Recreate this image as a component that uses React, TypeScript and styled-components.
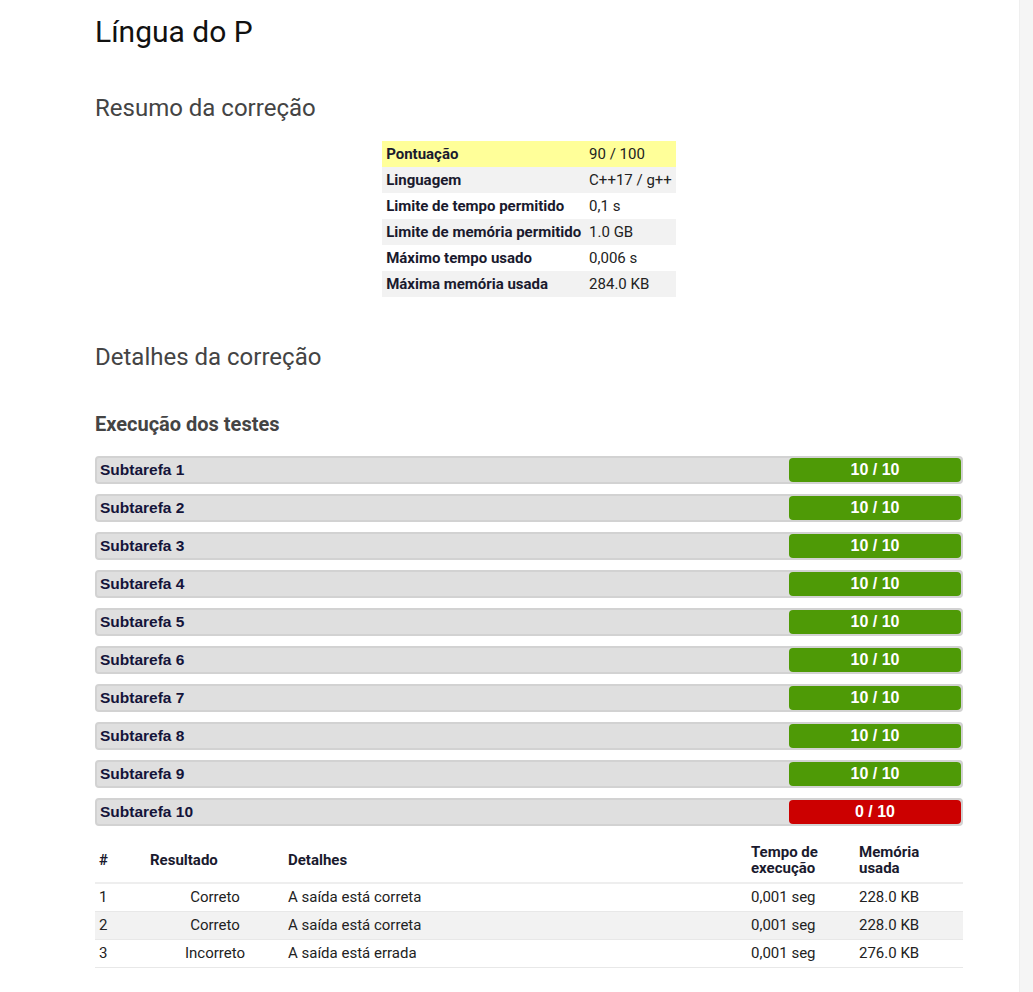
import React from "react";
import styled, { createGlobalStyle } from "styled-components";

const Global = createGlobalStyle`
  html, body { margin: 0; padding: 0; background: #fff; }
  body { font-family: Roboto, "Liberation Sans", Arial, sans-serif; color: #222; }
  * { box-sizing: border-box; }
`;

const Page = styled.div`
  display: flex;
  min-height: 992px;
`;

const Main = styled.main`
  flex: 1;
  padding: 0 56px 24px 95px;
`;

const Gutter = styled.aside`
  width: 14px;
  background: #f5f5f5;
  border-left: 1px solid #efefef;
`;

const Title = styled.h1`
  margin: 14px 0 0;
  font-size: 30px;
  line-height: 36px;
  font-weight: 400;
  color: #111;
`;

const SectionTitle = styled.h2<{ $top: number }>`
  margin: ${(p) => p.$top}px 0 0;
  font-size: 24px;
  line-height: 28px;
  font-weight: 400;
  color: #444;
`;

const SubTitle = styled.h3`
  margin: 41px 0 0;
  font-size: 20px;
  line-height: 24px;
  font-weight: 700;
  color: #444;
`;

const SummaryWrap = styled.div`
  display: flex;
  justify-content: center;
  margin: 19px 0 0;
`;

const SummaryTable = styled.table`
  border-collapse: collapse;
  font-size: 15px;
  width: 293px;
`;

const SummaryRow = styled.tr<{ $bg: string }>`
  background: ${(p) => p.$bg};
  height: 26px;
`;

const SummaryLabel = styled.th`
  text-align: left;
  font-weight: 700;
  color: #1a1a2e;
  padding: 0 4px;
  white-space: nowrap;
`;

const SummaryValue = styled.td`
  padding: 0 4px;
  color: #222;
  white-space: nowrap;
`;

const Bars = styled.div`
  display: flex;
  flex-direction: column;
  gap: 10px;
  margin-top: 20px;
`;

const Bar = styled.div`
  display: flex;
  align-items: center;
  justify-content: space-between;
  height: 28px;
  background: #dfdfdf;
  border: 2px solid #d2d2d2;
  border-radius: 4px;
`;

const BarLabel = styled.span`
  font-family: "Liberation Sans", Arial, sans-serif;
  font-weight: 700;
  font-size: 15.5px;
  color: #14143a;
  padding-left: 3px;
`;

const Score = styled.span<{ $ok: boolean }>`
  width: 172px;
  height: 24px;
  border-radius: 4px;
  background: ${(p) => (p.$ok ? "#4e9a06" : "#cc0000")};
  color: #fff;
  font-family: "Liberation Sans", Arial, sans-serif;
  font-weight: 700;
  font-size: 16px;
  display: flex;
  align-items: center;
  justify-content: center;
  padding-bottom: 1px;
`;

const TestTable = styled.table`
  width: 100%;
  border-collapse: collapse;
  margin-top: 14px;
  font-size: 15px;
`;

const HeadCell = styled.th<{ $w?: number }>`
  text-align: left;
  font-weight: 700;
  color: #1a1a2e;
  padding: 4px 4px 6px;
  line-height: 16px;
  vertical-align: middle;
  border-bottom: 2px solid #eee;
  width: ${(p) => (p.$w ? `${p.$w}px` : "auto")};
`;

const TestRow = styled.tr<{ $alt: boolean }>`
  background: ${(p) => (p.$alt ? "#f2f2f2" : "#fff")};
  height: 28px;
  border-bottom: 1px solid #e8e8e8;
`;

const Cell = styled.td<{ $center?: boolean }>`
  padding: 0 4px;
  color: #222;
  text-align: ${(p) => (p.$center ? "center" : "left")};
`;

const summary = [
  ["Pontuação", "90 / 100", "#ffff99"],
  ["Linguagem", "C++17 / g++", "#f2f2f2"],
  ["Limite de tempo permitido", "0,1 s", "#fff"],
  ["Limite de memória permitido", "1.0 GB", "#f2f2f2"],
  ["Máximo tempo usado", "0,006 s", "#fff"],
  ["Máxima memória usada", "284.0 KB", "#f2f2f2"],
];

const subtasks = Array.from({ length: 10 }, (_, i) => ({
  name: `Subtarefa ${i + 1}`,
  score: i === 9 ? "0 / 10" : "10 / 10",
  ok: i !== 9,
}));

const tests = [
  ["1", "Correto", "A saída está correta", "0,001 seg", "228.0 KB"],
  ["2", "Correto", "A saída está correta", "0,001 seg", "228.0 KB"],
  ["3", "Incorreto", "A saída está errada", "0,001 seg", "276.0 KB"],
];

export default function App() {
  return (
    <Page>
      <Global />
      <Main>
        <Title>Língua do P</Title>
        <SectionTitle $top={44}>Resumo da correção</SectionTitle>
        <SummaryWrap>
          <SummaryTable>
            <tbody>
              {summary.map(([k, v, bg]) => (
                <SummaryRow key={k} $bg={bg}>
                  <SummaryLabel>{k}</SummaryLabel>
                  <SummaryValue>{v}</SummaryValue>
                </SummaryRow>
              ))}
            </tbody>
          </SummaryTable>
        </SummaryWrap>
        <SectionTitle $top={46}>Detalhes da correção</SectionTitle>
        <SubTitle>Execução dos testes</SubTitle>
        <Bars>
          {subtasks.map((s) => (
            <Bar key={s.name}>
              <BarLabel>{s.name}</BarLabel>
              <Score $ok={s.ok}>{s.score}</Score>
            </Bar>
          ))}
        </Bars>
        <TestTable>
          <thead>
            <tr>
              <HeadCell $w={51}>#</HeadCell>
              <HeadCell $w={138}>Resultado</HeadCell>
              <HeadCell>Detalhes</HeadCell>
              <HeadCell $w={108}>Tempo de execução</HeadCell>
              <HeadCell $w={108}>Memória usada</HeadCell>
            </tr>
          </thead>
          <tbody>
            {tests.map((t, i) => (
              <TestRow key={t[0]} $alt={i === 1}>
                <Cell>{t[0]}</Cell>
                <Cell $center>{t[1]}</Cell>
                <Cell>{t[2]}</Cell>
                <Cell>{t[3]}</Cell>
                <Cell>{t[4]}</Cell>
              </TestRow>
            ))}
          </tbody>
        </TestTable>
      </Main>
      <Gutter />
    </Page>
  );
}
